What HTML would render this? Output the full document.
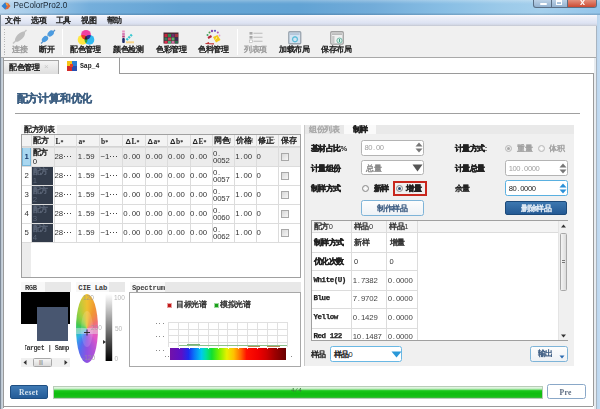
<!DOCTYPE html>
<html><head><meta charset="utf-8">
<style>
*{margin:0;padding:0;box-sizing:border-box}
html,body{width:600px;height:409px;overflow:hidden;background:#fff}
body{position:relative;font-family:"Liberation Sans",sans-serif;color:#222;font-size:7.5px;line-height:1}
.a{position:absolute}
i{font-style:normal;display:inline-block;width:1em;text-align:center;-webkit-text-stroke:0.4px currentColor}
.t{position:absolute;white-space:nowrap;line-height:1}
</style></head><body>
<!-- frame -->
<div class="a" style="left:0;top:0;width:600px;height:409px;background:linear-gradient(90deg,#7e8a98 0,#7e8a98 1px,#b8c4d0 1px,#d0d8e0 3px,#fff 3px)"></div>
<div class="a" style="left:594px;top:0;width:6px;height:409px;background:linear-gradient(90deg,#e8ecf0 0,#e8ecf0 2px,#a8b4c0 2px,#a8b4c0 3px,#bcd6ee 3px,#c4dcf2 100%)"></div>
<!-- title bar -->
<div class="a" style="left:0;top:0;width:600px;height:14.5px;background:linear-gradient(90deg,#b9d6ee 0,#a4cbe9 6%,#74aedb 15%,#64a4d4 30%,#62a3d4 50%,#72acd9 62%,#88bee4 74%,#9ccae9 84%,#a4cfec 90%,#94c5ea 100%)"></div>
<div class="a" style="left:0;top:0;width:600px;height:14.5px;background:linear-gradient(rgba(255,255,255,0.28) 0,rgba(255,255,255,0.12) 2px,rgba(255,255,255,0) 4px,rgba(0,0,0,0) 12.5px,rgba(40,70,100,0.22) 14.5px)"></div>
<div class="a" style="left:1px;top:1.5px;width:10px;height:7.5px;">
<svg width="10" height="8" viewBox="0 0 10 8"><path d="M0.5 4 L4 0.5 L6 2 L6 6.5 L4 7.5 Z" fill="#2f7fd0"/><path d="M4 0.5 L7 1 L9.5 4 L7 7 L4 7.5 L6 4 Z" fill="#e06a3a"/><path d="M5 1 L7 1.5 L6.5 4 L5 3 Z" fill="#f0a040"/></svg>
</div>
<div class="t" style="left:13.5px;top:2.3px;font-size:8.2px;color:#1b2733">PeColorPro2.0</div>
<!-- window controls -->
<div class="a" style="left:533px;top:-1px;width:64px;height:8.5px;border:1px solid #5a6e84;border-top:none;border-radius:0 0 3px 3px;background:linear-gradient(#c2d6ea,#94b2d0);overflow:hidden">
 <div class="a" style="left:17px;top:0;width:1px;height:8px;background:#5a6e84"></div>
 <div class="a" style="left:33px;top:0;width:1px;height:8px;background:#5a6e84"></div>
 <div class="a" style="left:34px;top:0;width:30px;height:8px;background:linear-gradient(#e89a88,#cc4a32)"></div>
 <div class="a" style="left:5.5px;top:4px;width:7px;height:2px;background:#fff;border-radius:1px"></div>
 <div class="a" style="left:22px;top:0.5px;width:6px;height:5px;border:1px solid #fff;border-top-width:2px"></div>
 <div class="t" style="left:46px;top:-1.5px;font-size:9px;color:#fff;font-weight:bold">x</div>
</div>
<!-- menu bar -->
<div class="a" style="left:1px;top:14.5px;width:596px;height:11.5px;background:linear-gradient(#fbfbfd 0,#eef0f8 20%,#dde3f3 80%,#d2d6e4 100%);border-bottom:1px solid #c9cdd8"></div>
<div class="t" style="left:5.4px;top:16.8px;font-size:7.5px;color:#222"><i>文</i><i>件</i></div>
<div class="t" style="left:31.4px;top:16.8px;font-size:7.5px;color:#222"><i>选</i><i>项</i></div>
<div class="t" style="left:55.9px;top:16.8px;font-size:7.5px;color:#222"><i>工</i><i>具</i></div>
<div class="t" style="left:81.3px;top:16.8px;font-size:7.5px;color:#222"><i>视</i><i>图</i></div>
<div class="t" style="left:106.6px;top:16.8px;font-size:7.5px;color:#222"><i>帮</i><i>助</i></div>
<!-- toolbar -->
<div class="a" style="left:1px;top:26px;width:595px;height:31.5px;background:#f0f0f0;border-bottom:1px solid #a9a9a9"></div>
<div class="a" style="left:4px;top:29px;width:1px;height:26px;background:repeating-linear-gradient(#b8b8b8 0,#b8b8b8 1px,transparent 1px,transparent 2.5px)"></div>
<div class="a" style="left:62px;top:29px;width:1px;height:26px;background:#d0d0d0;border-right:1px solid #fff"></div>
<div class="a" style="left:237px;top:29px;width:1px;height:26px;background:#d0d0d0;border-right:1px solid #fff"></div>
<svg class="a" style="left:10px;top:28px" width="20" height="18" viewBox="0 0 20 18">
 <path d="M3 15.5 L6.5 12" stroke="#c4c4c4" stroke-width="1.5"/>
 <path d="M16.5 2 L13.5 5" stroke="#c4c4c4" stroke-width="1.5"/>
 <ellipse cx="10" cy="8.7" rx="6.5" ry="3" transform="rotate(-45 10 8.7)" fill="#bdbdbd"/>
</svg>
<svg class="a" style="left:38px;top:28px" width="20" height="18" viewBox="0 0 20 18">
 <path d="M3 15.5 L5.5 13" stroke="#5a8fc0" stroke-width="1.3"/>
 <path d="M17 2 L14.5 4.5" stroke="#5a8fc0" stroke-width="1.3"/>
 <ellipse cx="7" cy="11" rx="3.6" ry="2.6" transform="rotate(-45 7 11)" fill="#4b9be0"/>
 <ellipse cx="12.7" cy="5.5" rx="3.6" ry="2.6" transform="rotate(-45 12.7 5.5)" fill="#4b9be0"/>
 <path d="M8.5 8.5 L11 7" stroke="#8ab" stroke-width="0.8"/>
</svg>
<svg class="a" style="left:77px;top:28.5px" width="18" height="17" viewBox="0 0 18 17">
 <g style="isolation:isolate">
 <circle cx="9" cy="5.8" r="4.9" fill="#f040a0" style="mix-blend-mode:multiply"/>
 <circle cx="5.6" cy="10.8" r="4.9" fill="#ffe640" style="mix-blend-mode:multiply"/>
 <circle cx="12.4" cy="10.8" r="4.9" fill="#30b8f0" style="mix-blend-mode:multiply"/>
 </g>
</svg>
<svg class="a" style="left:120px;top:29px" width="16" height="16" viewBox="0 0 16 16">
 <rect x="2.2" y="1.5" width="2.6" height="2" fill="#e88fc0"/>
 <rect x="2.2" y="4" width="2.6" height="2" fill="#d77ab5"/>
 <rect x="2.2" y="6.5" width="2.6" height="2" fill="#c23d7a"/>
 <rect x="2.2" y="9" width="2.6" height="5" rx="1" fill="#1f2e6a"/>
 <path d="M6.5 11 L12 5.5" stroke="#38c8d0" stroke-width="2.3" stroke-dasharray="2 0.8"/>
 <rect x="6" y="12.3" width="8" height="2" fill="#f5d48a"/>
</svg>
<svg class="a" style="left:163px;top:31px" width="17" height="14" viewBox="0 0 17 14">
 <rect x="0.5" y="1.5" width="15" height="11" fill="#4a2a35"/>
 <rect x="1.5" y="3" width="3" height="3" fill="#c3263d"/><rect x="5" y="3" width="3" height="3" fill="#2b8a4a"/><rect x="8.5" y="3" width="3" height="3" fill="#6b2d6e"/><rect x="12" y="3" width="3" height="3" fill="#a03040"/>
 <rect x="1.5" y="6.5" width="3" height="3" fill="#3a7a5a"/><rect x="5" y="6.5" width="3" height="3" fill="#d43b5a"/><rect x="8.5" y="6.5" width="3" height="3" fill="#5ab06a"/><rect x="12" y="6.5" width="3" height="3" fill="#3a2a5a"/>
 <rect x="1.5" y="10" width="3" height="2.5" fill="#e03050"/><rect x="5" y="10" width="3" height="2.5" fill="#4ab07a"/><rect x="8.5" y="10" width="3" height="2.5" fill="#d070a0"/><rect x="12" y="10" width="3" height="2.5" fill="#2a6a4a"/>
</svg>
<svg class="a" style="left:205px;top:29px" width="17" height="16" viewBox="0 0 17 16">
 <circle cx="7" cy="2" r="1.2" fill="#8a4ab0"/><circle cx="10" cy="1.8" r="1.1" fill="#5a5ac0"/><circle cx="12.8" cy="3.5" r="1" fill="#b05ab0"/>
 <circle cx="4.5" cy="3.5" r="1" fill="#4aa04a"/><circle cx="2.5" cy="6" r="1" fill="#40a060"/>
 <path d="M2.5 8 L6 6 L7 8 L3.5 10 Z" fill="#b8283a"/>
 <path d="M4 13.5 L2 14.5 L9 14.8" stroke="#c03030" stroke-width="1.2" fill="none"/>
 <path d="M8 8 L12.5 6 L15.5 11 L11 13.5 Z" fill="#f2c81a"/>
 <path d="M11.2 8 L12 9 L10 10.5" stroke="#fff0a0" stroke-width="0.8" fill="none"/>
 <circle cx="14.5" cy="6.5" r="0.9" fill="#e0a0d0"/>
</svg>
<svg class="a" style="left:248px;top:31px" width="16" height="13" viewBox="0 0 16 13">
 <rect x="1.5" y="1" width="3" height="2.6" fill="#a8a8a8"/><rect x="5.5" y="1.7" width="9" height="1.2" fill="#c4c4c4"/>
 <rect x="1.5" y="5" width="3" height="2.6" fill="#a8a8a8"/><rect x="5.5" y="5.7" width="9" height="1.2" fill="#c4c4c4"/>
 <rect x="1.5" y="9" width="3" height="2.6" fill="#fff" stroke="#b0b0b0" stroke-width="0.6"/><rect x="5.5" y="9.7" width="9" height="1.2" fill="#c4c4c4"/>
</svg>
<svg class="a" style="left:288px;top:30.5px" width="14" height="14" viewBox="0 0 14 14">
 <rect x="0.75" y="0.75" width="12" height="12" rx="1" fill="#d4e4f2" stroke="#9aa4ae" stroke-width="1.3"/>
 <rect x="2" y="2.3" width="9.5" height="1.5" fill="#aec0d4"/>
 <circle cx="7" cy="8.3" r="2.4" fill="none" stroke="#58bcd8" stroke-width="1.1"/><path d="M7 5.2v1M7 10.4v1M3.9 8.3h1M9.1 8.3h1" stroke="#58bcd8" stroke-width="0.8"/>
</svg>
<svg class="a" style="left:330px;top:30.5px" width="14" height="14" viewBox="0 0 14 14">
 <rect x="0.75" y="0.75" width="12.5" height="12.3" rx="1" fill="#f0f0f0" stroke="#a0a0a0" stroke-width="1.3"/>
 <rect x="2" y="2.3" width="10" height="1.6" fill="#b4b4b4"/>
 <rect x="2.2" y="5" width="2.3" height="7" fill="#c8c8c8"/>
 <circle cx="9.5" cy="9.6" r="2.6" fill="#d8f0e8" stroke="#6ab0a0" stroke-width="0.9"/>
 <path d="M9.5 8 L9.5 11" stroke="#3a9a80" stroke-width="0.9"/>
</svg>
<div class="t" style="left:12px;top:46px;color:#9c9c9c"><i>连</i><i>接</i></div>
<div class="t" style="left:39px;top:46px;color:#222"><i>断</i><i>开</i></div>
<div class="t" style="left:70px;top:46px;color:#222"><i>配</i><i>色</i><i>管</i><i>理</i></div>
<div class="t" style="left:113px;top:46px;color:#222"><i>颜</i><i>色</i><i>检</i><i>测</i></div>
<div class="t" style="left:156px;top:46px;color:#222"><i>色</i><i>彩</i><i>管</i><i>理</i></div>
<div class="t" style="left:198px;top:46px;color:#222"><i>色</i><i>料</i><i>管</i><i>理</i></div>
<div class="t" style="left:244px;top:46px;color:#9c9c9c"><i>列</i><i>表</i><i>项</i></div>
<div class="t" style="left:279px;top:46px;color:#222"><i>加</i><i>载</i><i>布</i><i>局</i></div>
<div class="t" style="left:321px;top:46px;color:#222"><i>保</i><i>存</i><i>布</i><i>局</i></div>


<!-- tab bar -->
<div class="a" style="left:3px;top:57.5px;width:591px;height:16px;background:#fff"></div>
<div class="a" style="left:3px;top:60.3px;width:56px;height:13.8px;background:linear-gradient(#f4f4f4,#dedede);border:1px solid #a6a6a6;border-bottom:none"></div>
<div class="t" style="left:9.4px;top:64px;font-size:7.5px;color:#222"><i>配</i><i>色</i><i>管</i><i>理</i></div>
<div class="t" style="left:44px;top:63px;font-size:8px;color:#c8c8c8">×</div>
<div class="a" style="left:119px;top:57.5px;width:1px;height:16.5px;background:#9a9a9a"></div>
<div class="a" style="left:119px;top:73.3px;width:474px;height:1px;background:#9a9a9a"></div>
<div class="a" style="left:3px;top:57.5px;width:1px;height:350px;background:#9a9a9a"></div>
<div class="a" style="left:592.5px;top:73.3px;width:1px;height:333px;background:#9a9a9a"></div>
<div class="a" style="left:3px;top:406px;width:590px;height:1px;background:#9a9a9a"></div>
<svg class="a" style="left:67px;top:61px" width="12" height="10" viewBox="0 0 12 10">
 <rect x="0" y="0" width="5" height="5" fill="#f5c518"/><rect x="5" y="0" width="5" height="5" fill="#2a7fd4"/>
 <rect x="0" y="5" width="5" height="5" fill="#d42a2a"/><rect x="5" y="5" width="5" height="5" fill="#2a4fb0"/>
 <path d="M3 3 L6 3 L6 6 L3 6Z" fill="#e0402a"/>
</svg>
<div class="t" style="left:80px;top:64px;font-family:'Liberation Mono',monospace;font-weight:bold;font-size:6.6px;color:#222;letter-spacing:-0.1px">Sap_4</div>

<!-- content -->
<div class="t" style="left:16.6px;top:92.5px;font-size:10.8px;font-weight:bold;color:#3d5f82"><i>配</i><i>方</i><i>计</i><i>算</i><i>和</i><i>优</i><i>化</i></div>
<div class="a" style="left:15px;top:113px;width:565px;height:1px;background:#a0a0a0"></div>

<!--MAIN-->
<div class="a" style="left:21px;top:125px;width:279.5px;height:9px;background:linear-gradient(90deg,#fafafa 0,#fafafa 36px,#ececec 36px,#ececec 100%)"></div>
<div class="t" style="left:24px;top:126px;"><i>配</i><i>方</i><i>列</i><i>表</i></div>
<div class="a" style="left:21px;top:134px;width:280px;height:144px;background:#fff;border:1px solid #a0a0a0"></div>
<div class="a" style="left:22px;top:242px;width:9px;height:35px;background:#ececec"></div>
<div class="a" style="left:22px;top:135px;width:278px;height:12px;background:#f3f3f3;border-bottom:1px solid #d4d4d4"></div>
<div class="a" style="left:31px;top:147px;width:269px;height:19px;background:#ececec"></div>
<div class="a" style="left:22px;top:147px;width:9px;height:19px;background:#a9d7f0;border:1px solid #78b8dc"></div>
<div class="a" style="left:31.5px;top:166.5px;width:21.5px;height:18px;background:#323b4a"></div>
<div class="a" style="left:31.5px;top:185.5px;width:21.5px;height:18px;background:#323b4a"></div>
<div class="a" style="left:31.5px;top:204.5px;width:21.5px;height:18px;background:#323b4a"></div>
<div class="a" style="left:31.5px;top:223.5px;width:21.5px;height:18px;background:#323b4a"></div>
<div class="a" style="left:31px;top:135px;width:1px;height:107px;background:#dcdcdc"></div>
<div class="a" style="left:53.5px;top:135px;width:1px;height:107px;background:#dcdcdc"></div>
<div class="a" style="left:76px;top:135px;width:1px;height:107px;background:#dcdcdc"></div>
<div class="a" style="left:99px;top:135px;width:1px;height:107px;background:#dcdcdc"></div>
<div class="a" style="left:122px;top:135px;width:1px;height:107px;background:#dcdcdc"></div>
<div class="a" style="left:144.8px;top:135px;width:1px;height:107px;background:#dcdcdc"></div>
<div class="a" style="left:167px;top:135px;width:1px;height:107px;background:#dcdcdc"></div>
<div class="a" style="left:189.5px;top:135px;width:1px;height:107px;background:#dcdcdc"></div>
<div class="a" style="left:211.5px;top:135px;width:1px;height:107px;background:#dcdcdc"></div>
<div class="a" style="left:233.8px;top:135px;width:1px;height:107px;background:#dcdcdc"></div>
<div class="a" style="left:256px;top:135px;width:1px;height:107px;background:#dcdcdc"></div>
<div class="a" style="left:278px;top:135px;width:1px;height:107px;background:#dcdcdc"></div>
<div class="a" style="left:22px;top:147px;width:278px;height:1px;background:#dcdcdc"></div>
<div class="a" style="left:22px;top:166px;width:278px;height:1px;background:#dcdcdc"></div>
<div class="a" style="left:22px;top:185px;width:278px;height:1px;background:#dcdcdc"></div>
<div class="a" style="left:22px;top:204px;width:278px;height:1px;background:#dcdcdc"></div>
<div class="a" style="left:22px;top:223px;width:278px;height:1px;background:#dcdcdc"></div>
<div class="a" style="left:22px;top:242px;width:278px;height:1px;background:#dcdcdc"></div>
<div class="t" style="left:33px;top:137px;"><i>配</i><i>方</i></div>
<div class="t" style="left:55.5px;top:138px;font-family:'Liberation Serif',serif;font-weight:bold;font-size:7.6px;color:#222"><span style="font-size:7.4px">L</span><span style="font-size:6px">*</span></div>
<div class="t" style="left:78.5px;top:138px;font-family:'Liberation Serif',serif;font-weight:bold;font-size:7.6px;color:#222"><span style="font-size:7.4px">a</span><span style="font-size:6px">*</span></div>
<div class="t" style="left:101px;top:138px;font-family:'Liberation Serif',serif;font-weight:bold;font-size:7.6px;color:#222"><span style="font-size:7.4px">b</span><span style="font-size:6px">*</span></div>
<div class="t" style="left:125.5px;top:137.5px;font-family:'Liberation Serif',serif;font-weight:bold;font-size:7.6px;color:#222"><span style="font-family:'Liberation Sans',sans-serif;font-size:7.6px">Δ</span><span style="font-size:7.4px;margin-left:0.6px">L</span><span style="font-size:6px">*</span></div>
<div class="t" style="left:147.5px;top:137.5px;font-family:'Liberation Serif',serif;font-weight:bold;font-size:7.6px;color:#222"><span style="font-family:'Liberation Sans',sans-serif;font-size:7.6px">Δ</span><span style="font-size:7.4px;margin-left:0.6px">a</span><span style="font-size:6px">*</span></div>
<div class="t" style="left:170px;top:137.5px;font-family:'Liberation Serif',serif;font-weight:bold;font-size:7.6px;color:#222"><span style="font-family:'Liberation Sans',sans-serif;font-size:7.6px">Δ</span><span style="font-size:7.4px;margin-left:0.6px">b</span><span style="font-size:6px">*</span></div>
<div class="t" style="left:192.5px;top:137.5px;font-family:'Liberation Serif',serif;font-weight:bold;font-size:7.6px;color:#222"><span style="font-family:'Liberation Sans',sans-serif;font-size:7.6px">Δ</span><span style="font-size:7.4px;margin-left:0.6px">E</span><span style="font-size:6px">*</span></div>
<div class="t" style="left:214px;top:137px;"><i>网</i><i>色</i>!</div>
<div class="t" style="left:236px;top:137px;"><i>价</i><i>格</i>!</div>
<div class="t" style="left:258px;top:137px;"><i>修</i><i>正</i>:</div>
<div class="t" style="left:281px;top:137px;"><i>保</i><i>存</i></div>
<div class="t" style="left:24.5px;top:153px;font-family:'Liberation Sans',sans-serif;font-size:7.8px;letter-spacing:-0.15px;color:#1a3a6a;font-weight:bold">1</div>
<div class="t" style="left:32.7px;top:149px;color:#222;"><i>配</i><i>方</i></div>
<div class="t" style="left:32.7px;top:157.5px;font-family:'Liberation Sans',sans-serif;font-size:7.8px;letter-spacing:-0.15px;color:#222">0</div>
<div class="t" style="left:54.5px;top:153px;font-family:'Liberation Sans',sans-serif;font-size:7.8px;letter-spacing:-0.15px;color:#333">28</div>
<div class="t" style="left:77.7px;top:153px;font-family:'Liberation Sans',sans-serif;font-size:7.8px;letter-spacing:-0.15px;color:#333">1<span style="margin:0 1.2px 0 1px">.</span>59</div>
<div class="t" style="left:100.5px;top:153px;font-family:'Liberation Sans',sans-serif;font-size:7.8px;letter-spacing:-0.15px;color:#333">−1</div>
<div class="t" style="left:123.3px;top:153px;font-family:'Liberation Sans',sans-serif;font-size:7.8px;letter-spacing:-0.15px;color:#333">0<span style="margin:0 1.2px 0 1px">.</span>00</div>
<div class="t" style="left:145.7px;top:153px;font-family:'Liberation Sans',sans-serif;font-size:7.8px;letter-spacing:-0.15px;color:#333">0<span style="margin:0 1.2px 0 1px">.</span>00</div>
<div class="t" style="left:167.9px;top:153px;font-family:'Liberation Sans',sans-serif;font-size:7.8px;letter-spacing:-0.15px;color:#333">0<span style="margin:0 1.2px 0 1px">.</span>00</div>
<div class="t" style="left:190.1px;top:153px;font-family:'Liberation Sans',sans-serif;font-size:7.8px;letter-spacing:-0.15px;color:#333">0<span style="margin:0 1.2px 0 1px">.</span>00</div>
<div class="t" style="left:235.2px;top:153px;font-family:'Liberation Sans',sans-serif;font-size:7.8px;letter-spacing:-0.15px;color:#333">1<span style="margin:0 1.2px 0 1px">.</span>00</div>
<div class="t" style="left:256.5px;top:153px;font-family:'Liberation Sans',sans-serif;font-size:7.8px;letter-spacing:-0.15px;color:#333">0</div>
<div class="a" style="left:63.5px;top:155.6px;width:7.5px;height:1.3px;background:repeating-linear-gradient(90deg,#444 0,#444 1.3px,transparent 1.3px,transparent 2.9px)"></div>
<div class="a" style="left:109.5px;top:155.6px;width:7.5px;height:1.3px;background:repeating-linear-gradient(90deg,#444 0,#444 1.3px,transparent 1.3px,transparent 2.9px)"></div>
<div class="t" style="left:213px;top:149.6px;font-family:'Liberation Sans',sans-serif;font-size:7.8px;letter-spacing:-0.15px;color:#333">0<span style="margin-left:0.7px">.</span></div>
<div class="t" style="left:213px;top:156.8px;font-family:'Liberation Sans',sans-serif;font-size:7.8px;letter-spacing:-0.15px;color:#333">0052</div>
<div class="a" style="left:280.5px;top:152.5px;width:8px;height:8px;border:1px solid #a8a8a8;background:linear-gradient(135deg,#d8d8d8,#f6f6f6)"></div>
<div class="t" style="left:24.5px;top:172px;font-family:'Liberation Sans',sans-serif;font-size:7.8px;letter-spacing:-0.15px;color:#333;font-weight:normal">2</div>
<div class="t" style="left:32.7px;top:168px;color:#5c6678;"><i>配</i><i>方</i></div>
<div class="t" style="left:32.7px;top:176.5px;font-family:'Liberation Sans',sans-serif;font-size:7.8px;letter-spacing:-0.15px;color:#5c6678">1</div>
<div class="t" style="left:54.5px;top:172px;font-family:'Liberation Sans',sans-serif;font-size:7.8px;letter-spacing:-0.15px;color:#333">28</div>
<div class="t" style="left:77.7px;top:172px;font-family:'Liberation Sans',sans-serif;font-size:7.8px;letter-spacing:-0.15px;color:#333">1<span style="margin:0 1.2px 0 1px">.</span>59</div>
<div class="t" style="left:100.5px;top:172px;font-family:'Liberation Sans',sans-serif;font-size:7.8px;letter-spacing:-0.15px;color:#333">−1</div>
<div class="t" style="left:123.3px;top:172px;font-family:'Liberation Sans',sans-serif;font-size:7.8px;letter-spacing:-0.15px;color:#333">0<span style="margin:0 1.2px 0 1px">.</span>00</div>
<div class="t" style="left:145.7px;top:172px;font-family:'Liberation Sans',sans-serif;font-size:7.8px;letter-spacing:-0.15px;color:#333">0<span style="margin:0 1.2px 0 1px">.</span>00</div>
<div class="t" style="left:167.9px;top:172px;font-family:'Liberation Sans',sans-serif;font-size:7.8px;letter-spacing:-0.15px;color:#333">0<span style="margin:0 1.2px 0 1px">.</span>00</div>
<div class="t" style="left:190.1px;top:172px;font-family:'Liberation Sans',sans-serif;font-size:7.8px;letter-spacing:-0.15px;color:#333">0<span style="margin:0 1.2px 0 1px">.</span>00</div>
<div class="t" style="left:235.2px;top:172px;font-family:'Liberation Sans',sans-serif;font-size:7.8px;letter-spacing:-0.15px;color:#333">1<span style="margin:0 1.2px 0 1px">.</span>00</div>
<div class="t" style="left:256.5px;top:172px;font-family:'Liberation Sans',sans-serif;font-size:7.8px;letter-spacing:-0.15px;color:#333">0</div>
<div class="a" style="left:63.5px;top:174.6px;width:7.5px;height:1.3px;background:repeating-linear-gradient(90deg,#444 0,#444 1.3px,transparent 1.3px,transparent 2.9px)"></div>
<div class="a" style="left:109.5px;top:174.6px;width:7.5px;height:1.3px;background:repeating-linear-gradient(90deg,#444 0,#444 1.3px,transparent 1.3px,transparent 2.9px)"></div>
<div class="t" style="left:213px;top:168.6px;font-family:'Liberation Sans',sans-serif;font-size:7.8px;letter-spacing:-0.15px;color:#333">0<span style="margin-left:0.7px">.</span></div>
<div class="t" style="left:213px;top:175.8px;font-family:'Liberation Sans',sans-serif;font-size:7.8px;letter-spacing:-0.15px;color:#333">0057</div>
<div class="a" style="left:280.5px;top:171.5px;width:8px;height:8px;border:1px solid #a8a8a8;background:linear-gradient(135deg,#d8d8d8,#f6f6f6)"></div>
<div class="t" style="left:24.5px;top:191px;font-family:'Liberation Sans',sans-serif;font-size:7.8px;letter-spacing:-0.15px;color:#333;font-weight:normal">3</div>
<div class="t" style="left:32.7px;top:187px;color:#5c6678;"><i>配</i><i>方</i></div>
<div class="t" style="left:32.7px;top:195.5px;font-family:'Liberation Sans',sans-serif;font-size:7.8px;letter-spacing:-0.15px;color:#5c6678">2</div>
<div class="t" style="left:54.5px;top:191px;font-family:'Liberation Sans',sans-serif;font-size:7.8px;letter-spacing:-0.15px;color:#333">28</div>
<div class="t" style="left:77.7px;top:191px;font-family:'Liberation Sans',sans-serif;font-size:7.8px;letter-spacing:-0.15px;color:#333">1<span style="margin:0 1.2px 0 1px">.</span>59</div>
<div class="t" style="left:100.5px;top:191px;font-family:'Liberation Sans',sans-serif;font-size:7.8px;letter-spacing:-0.15px;color:#333">−1</div>
<div class="t" style="left:123.3px;top:191px;font-family:'Liberation Sans',sans-serif;font-size:7.8px;letter-spacing:-0.15px;color:#333">0<span style="margin:0 1.2px 0 1px">.</span>00</div>
<div class="t" style="left:145.7px;top:191px;font-family:'Liberation Sans',sans-serif;font-size:7.8px;letter-spacing:-0.15px;color:#333">0<span style="margin:0 1.2px 0 1px">.</span>00</div>
<div class="t" style="left:167.9px;top:191px;font-family:'Liberation Sans',sans-serif;font-size:7.8px;letter-spacing:-0.15px;color:#333">0<span style="margin:0 1.2px 0 1px">.</span>00</div>
<div class="t" style="left:190.1px;top:191px;font-family:'Liberation Sans',sans-serif;font-size:7.8px;letter-spacing:-0.15px;color:#333">0<span style="margin:0 1.2px 0 1px">.</span>00</div>
<div class="t" style="left:235.2px;top:191px;font-family:'Liberation Sans',sans-serif;font-size:7.8px;letter-spacing:-0.15px;color:#333">1<span style="margin:0 1.2px 0 1px">.</span>00</div>
<div class="t" style="left:256.5px;top:191px;font-family:'Liberation Sans',sans-serif;font-size:7.8px;letter-spacing:-0.15px;color:#333">0</div>
<div class="a" style="left:63.5px;top:193.6px;width:7.5px;height:1.3px;background:repeating-linear-gradient(90deg,#444 0,#444 1.3px,transparent 1.3px,transparent 2.9px)"></div>
<div class="a" style="left:109.5px;top:193.6px;width:7.5px;height:1.3px;background:repeating-linear-gradient(90deg,#444 0,#444 1.3px,transparent 1.3px,transparent 2.9px)"></div>
<div class="t" style="left:213px;top:187.6px;font-family:'Liberation Sans',sans-serif;font-size:7.8px;letter-spacing:-0.15px;color:#333">0<span style="margin-left:0.7px">.</span></div>
<div class="t" style="left:213px;top:194.8px;font-family:'Liberation Sans',sans-serif;font-size:7.8px;letter-spacing:-0.15px;color:#333">0057</div>
<div class="a" style="left:280.5px;top:190.5px;width:8px;height:8px;border:1px solid #a8a8a8;background:linear-gradient(135deg,#d8d8d8,#f6f6f6)"></div>
<div class="t" style="left:24.5px;top:210px;font-family:'Liberation Sans',sans-serif;font-size:7.8px;letter-spacing:-0.15px;color:#333;font-weight:normal">4</div>
<div class="t" style="left:32.7px;top:206px;color:#5c6678;"><i>配</i><i>方</i></div>
<div class="t" style="left:32.7px;top:214.5px;font-family:'Liberation Sans',sans-serif;font-size:7.8px;letter-spacing:-0.15px;color:#5c6678">3</div>
<div class="t" style="left:54.5px;top:210px;font-family:'Liberation Sans',sans-serif;font-size:7.8px;letter-spacing:-0.15px;color:#333">28</div>
<div class="t" style="left:77.7px;top:210px;font-family:'Liberation Sans',sans-serif;font-size:7.8px;letter-spacing:-0.15px;color:#333">1<span style="margin:0 1.2px 0 1px">.</span>59</div>
<div class="t" style="left:100.5px;top:210px;font-family:'Liberation Sans',sans-serif;font-size:7.8px;letter-spacing:-0.15px;color:#333">−1</div>
<div class="t" style="left:123.3px;top:210px;font-family:'Liberation Sans',sans-serif;font-size:7.8px;letter-spacing:-0.15px;color:#333">0<span style="margin:0 1.2px 0 1px">.</span>00</div>
<div class="t" style="left:145.7px;top:210px;font-family:'Liberation Sans',sans-serif;font-size:7.8px;letter-spacing:-0.15px;color:#333">0<span style="margin:0 1.2px 0 1px">.</span>00</div>
<div class="t" style="left:167.9px;top:210px;font-family:'Liberation Sans',sans-serif;font-size:7.8px;letter-spacing:-0.15px;color:#333">0<span style="margin:0 1.2px 0 1px">.</span>00</div>
<div class="t" style="left:190.1px;top:210px;font-family:'Liberation Sans',sans-serif;font-size:7.8px;letter-spacing:-0.15px;color:#333">0<span style="margin:0 1.2px 0 1px">.</span>00</div>
<div class="t" style="left:235.2px;top:210px;font-family:'Liberation Sans',sans-serif;font-size:7.8px;letter-spacing:-0.15px;color:#333">1<span style="margin:0 1.2px 0 1px">.</span>00</div>
<div class="t" style="left:256.5px;top:210px;font-family:'Liberation Sans',sans-serif;font-size:7.8px;letter-spacing:-0.15px;color:#333">0</div>
<div class="a" style="left:63.5px;top:212.6px;width:7.5px;height:1.3px;background:repeating-linear-gradient(90deg,#444 0,#444 1.3px,transparent 1.3px,transparent 2.9px)"></div>
<div class="a" style="left:109.5px;top:212.6px;width:7.5px;height:1.3px;background:repeating-linear-gradient(90deg,#444 0,#444 1.3px,transparent 1.3px,transparent 2.9px)"></div>
<div class="t" style="left:213px;top:206.6px;font-family:'Liberation Sans',sans-serif;font-size:7.8px;letter-spacing:-0.15px;color:#333">0<span style="margin-left:0.7px">.</span></div>
<div class="t" style="left:213px;top:213.8px;font-family:'Liberation Sans',sans-serif;font-size:7.8px;letter-spacing:-0.15px;color:#333">0060</div>
<div class="a" style="left:280.5px;top:209.5px;width:8px;height:8px;border:1px solid #a8a8a8;background:linear-gradient(135deg,#d8d8d8,#f6f6f6)"></div>
<div class="t" style="left:24.5px;top:229px;font-family:'Liberation Sans',sans-serif;font-size:7.8px;letter-spacing:-0.15px;color:#333;font-weight:normal">5</div>
<div class="t" style="left:32.7px;top:225px;color:#5c6678;"><i>配</i><i>方</i></div>
<div class="t" style="left:32.7px;top:233.5px;font-family:'Liberation Sans',sans-serif;font-size:7.8px;letter-spacing:-0.15px;color:#5c6678">4</div>
<div class="t" style="left:54.5px;top:229px;font-family:'Liberation Sans',sans-serif;font-size:7.8px;letter-spacing:-0.15px;color:#333">28</div>
<div class="t" style="left:77.7px;top:229px;font-family:'Liberation Sans',sans-serif;font-size:7.8px;letter-spacing:-0.15px;color:#333">1<span style="margin:0 1.2px 0 1px">.</span>59</div>
<div class="t" style="left:100.5px;top:229px;font-family:'Liberation Sans',sans-serif;font-size:7.8px;letter-spacing:-0.15px;color:#333">−1</div>
<div class="t" style="left:123.3px;top:229px;font-family:'Liberation Sans',sans-serif;font-size:7.8px;letter-spacing:-0.15px;color:#333">0<span style="margin:0 1.2px 0 1px">.</span>00</div>
<div class="t" style="left:145.7px;top:229px;font-family:'Liberation Sans',sans-serif;font-size:7.8px;letter-spacing:-0.15px;color:#333">0<span style="margin:0 1.2px 0 1px">.</span>00</div>
<div class="t" style="left:167.9px;top:229px;font-family:'Liberation Sans',sans-serif;font-size:7.8px;letter-spacing:-0.15px;color:#333">0<span style="margin:0 1.2px 0 1px">.</span>00</div>
<div class="t" style="left:190.1px;top:229px;font-family:'Liberation Sans',sans-serif;font-size:7.8px;letter-spacing:-0.15px;color:#333">0<span style="margin:0 1.2px 0 1px">.</span>00</div>
<div class="t" style="left:235.2px;top:229px;font-family:'Liberation Sans',sans-serif;font-size:7.8px;letter-spacing:-0.15px;color:#333">1<span style="margin:0 1.2px 0 1px">.</span>00</div>
<div class="t" style="left:256.5px;top:229px;font-family:'Liberation Sans',sans-serif;font-size:7.8px;letter-spacing:-0.15px;color:#333">0</div>
<div class="a" style="left:63.5px;top:231.6px;width:7.5px;height:1.3px;background:repeating-linear-gradient(90deg,#444 0,#444 1.3px,transparent 1.3px,transparent 2.9px)"></div>
<div class="a" style="left:109.5px;top:231.6px;width:7.5px;height:1.3px;background:repeating-linear-gradient(90deg,#444 0,#444 1.3px,transparent 1.3px,transparent 2.9px)"></div>
<div class="t" style="left:213px;top:225.6px;font-family:'Liberation Sans',sans-serif;font-size:7.8px;letter-spacing:-0.15px;color:#333">0<span style="margin-left:0.7px">.</span></div>
<div class="t" style="left:213px;top:232.8px;font-family:'Liberation Sans',sans-serif;font-size:7.8px;letter-spacing:-0.15px;color:#333">0062</div>
<div class="a" style="left:280.5px;top:228.5px;width:8px;height:8px;border:1px solid #a8a8a8;background:linear-gradient(135deg,#d8d8d8,#f6f6f6)"></div><div class="a" style="left:21px;top:282px;width:50px;height:9.5px;background:linear-gradient(90deg,#f8f8f8 0,#f8f8f8 24px,#e8e8e8 24px)"></div>
<div class="t" style="left:25px;top:284.5px;font-family:'Liberation Mono',monospace;font-size:7.2px;font-weight:bold;color:#3a3a3a;letter-spacing:-0.5px">RGB</div>
<div class="a" style="left:20.6px;top:291.5px;width:49.4px;height:32.5px;background:#000"></div>
<div class="a" style="left:36.8px;top:307px;width:31.5px;height:33.5px;background:#485670"></div>
<div class="a" style="left:25px;top:343px;width:45px;height:10px;overflow:hidden"><div class="t" style="left:-2px;top:2px;font-family:'Liberation Mono',monospace;font-size:6.8px;font-weight:bold;color:#333;letter-spacing:-0.55px">Target | Samp</div></div>
<div class="a" style="left:70px;top:340px;width:6px;height:30px;background:#fff"></div>
<div class="a" style="left:21px;top:357.5px;width:49px;height:9.5px;background:#f0f0f0"></div>
<div class="a" style="left:33px;top:358px;width:19px;height:8.5px;background:linear-gradient(#f6f6f6,#dadada);border:1px solid #a8a8a8;border-radius:1.5px"></div>
<div class="t" style="left:39px;top:359.5px;font-size:5px;color:#555">|||</div>
<svg class="a" style="left:23px;top:360px" width="4" height="5"><path d="M3.5 0 L0.5 2.5 L3.5 5Z" fill="#333"/></svg>
<svg class="a" style="left:64px;top:360px" width="4" height="5"><path d="M0.5 0 L3.5 2.5 L0.5 5Z" fill="#333"/></svg>
<div class="a" style="left:76px;top:282px;width:49px;height:9.5px;background:linear-gradient(90deg,#f8f8f8 0,#f8f8f8 33px,#e8e8e8 33px)"></div>
<div class="t" style="left:78.3px;top:284.5px;font-family:'Liberation Mono',monospace;font-size:7.2px;font-weight:bold;color:#3a3a3a;letter-spacing:-0.2px">CIE Lab</div>
<div class="a" style="left:76px;top:294px;width:22px;height:69.4px;border-radius:50%;overflow:hidden;background:conic-gradient(from 0deg at 11px 34.7px,#f0c030 0deg,#f09830 18deg,#f07070 55deg,#f068a0 80deg,#e058c8 140deg,#9050e0 180deg,#5070f0 200deg,#30b0e8 225deg,#30c8a0 255deg,#40c850 292deg,#a0d040 335deg,#f0c030 360deg)"><div class="a" style="left:5px;top:17px;width:12px;height:36px;border-radius:50%;background:rgba(255,255,255,0.15)"></div><div class="a" style="left:0;top:34px;width:22px;height:6px;background:rgba(230,230,230,0.45)"></div></div>
<svg class="a" style="left:74px;top:292px" width="54" height="74" viewBox="0 0 54 74">
<defs><linearGradient id="gb" x1="0" y1="0" x2="0" y2="1"><stop offset="0" stop-color="#fff"/><stop offset="1" stop-color="#000"/></linearGradient></defs>
<path d="M10 40.5 h6 M13 37.5 v6" stroke="#222" stroke-width="0.9"/>
<rect x="31.6" y="2" width="6.6" height="67" fill="url(#gb)"/>
<path d="M29 48 L32 50 L29 52Z" fill="#333"/>
</svg>
<div class="t" style="left:114px;top:295px;font-size:6.5px;color:#b8b8b8">100</div>
<div class="t" style="left:115px;top:326px;font-size:6.5px;color:#b8b8b8">50</div>
<div class="t" style="left:114.5px;top:356px;font-size:6.5px;color:#b8b8b8">0</div>
<div class="t" style="left:83px;top:294.5px;font-size:6.5px;color:rgba(150,150,150,0.8)">120</div>
<div class="t" style="left:82px;top:355px;font-size:6.5px;color:rgba(150,150,150,0.8)">-120</div>
<div class="t" style="left:91px;top:324.5px;font-size:6.5px;color:rgba(150,150,150,0.7)">200</div>
<div class="a" style="left:130px;top:282px;width:171px;height:9.5px;background:linear-gradient(90deg,#f8f8f8 0,#f8f8f8 35px,#e8e8e8 35px)"></div>
<div class="t" style="left:132px;top:284.5px;font-family:'Liberation Mono',monospace;font-size:7.2px;font-weight:bold;color:#3a3a3a;letter-spacing:-0.2px">Spectrum</div>
<div class="a" style="left:129.3px;top:291.5px;width:171.5px;height:75.5px;background:#fff;border:1px solid #a8a8a8"></div>
<div class="a" style="left:167px;top:302.5px;width:5px;height:5px;background:#c01818;border:1px solid #e8a0a0"></div>
<div class="t" style="left:176px;top:301px;font-size:7.5px;color:#333"><i>目</i><i>标</i><i>光</i><i>谱</i></div>
<div class="a" style="left:213.5px;top:302.5px;width:5px;height:5px;background:#18a018;border:1px solid #a0d8a0"></div>
<div class="t" style="left:220px;top:301px;font-size:7.5px;color:#333"><i>模</i><i>拟</i><i>光</i><i>谱</i></div>
<div class="a" style="left:168.0px;top:322px;width:0.6px;height:25px;background:#e0e0e0"></div>
<div class="a" style="left:177.9px;top:322px;width:0.6px;height:25px;background:#e0e0e0"></div>
<div class="a" style="left:187.8px;top:322px;width:0.6px;height:25px;background:#e0e0e0"></div>
<div class="a" style="left:197.7px;top:322px;width:0.6px;height:25px;background:#e0e0e0"></div>
<div class="a" style="left:207.6px;top:322px;width:0.6px;height:25px;background:#e0e0e0"></div>
<div class="a" style="left:217.5px;top:322px;width:0.6px;height:25px;background:#e0e0e0"></div>
<div class="a" style="left:227.4px;top:322px;width:0.6px;height:25px;background:#e0e0e0"></div>
<div class="a" style="left:237.3px;top:322px;width:0.6px;height:25px;background:#e0e0e0"></div>
<div class="a" style="left:247.2px;top:322px;width:0.6px;height:25px;background:#e0e0e0"></div>
<div class="a" style="left:257.1px;top:322px;width:0.6px;height:25px;background:#e0e0e0"></div>
<div class="a" style="left:267.0px;top:322px;width:0.6px;height:25px;background:#e0e0e0"></div>
<div class="a" style="left:276.9px;top:322px;width:0.6px;height:25px;background:#e0e0e0"></div>
<div class="a" style="left:286.8px;top:322px;width:0.6px;height:25px;background:#e0e0e0"></div>
<div class="a" style="left:168px;top:322px;width:119px;height:0.6px;background:#e0e0e0"></div>
<div class="a" style="left:168px;top:329px;width:119px;height:0.6px;background:#e0e0e0"></div>
<div class="a" style="left:168px;top:335.3px;width:119px;height:0.6px;background:#e0e0e0"></div>
<div class="a" style="left:168px;top:341.5px;width:119px;height:0.6px;background:#e0e0e0"></div>
<div class="a" style="left:170.4px;top:347.6px;width:116px;height:12.4px;background:linear-gradient(90deg,#7212a8 0%,#5a10c8 10%,#1a2cf0 16%,#0a78f8 21%,#00c8f0 27%,#00e0a0 31%,#10e030 36%,#70f000 42%,#e8f000 49%,#ffc000 55%,#ff6a00 61%,#ff1000 66%,#f00000 76%,#d00000 83%,#a00000 90%,#680000 100%)"></div>
<div class="a" style="left:179px;top:344.8px;width:108px;height:1px;background:#8ac08a"></div>
<div class="a" style="left:179.1px;top:347.6px;width:0.8px;height:1.5px;background:rgba(255,255,255,0.85)"></div>
<div class="a" style="left:188.8px;top:347.6px;width:0.8px;height:1.5px;background:rgba(255,255,255,0.85)"></div>
<div class="a" style="left:198.6px;top:347.6px;width:0.8px;height:1.5px;background:rgba(255,255,255,0.85)"></div>
<div class="a" style="left:208.3px;top:347.6px;width:0.8px;height:1.5px;background:rgba(255,255,255,0.85)"></div>
<div class="a" style="left:218.1px;top:347.6px;width:0.8px;height:1.5px;background:rgba(255,255,255,0.85)"></div>
<div class="a" style="left:227.8px;top:347.6px;width:0.8px;height:1.5px;background:rgba(255,255,255,0.85)"></div>
<div class="a" style="left:237.6px;top:347.6px;width:0.8px;height:1.5px;background:rgba(255,255,255,0.85)"></div>
<div class="a" style="left:247.3px;top:347.6px;width:0.8px;height:1.5px;background:rgba(255,255,255,0.85)"></div>
<div class="a" style="left:257.1px;top:347.6px;width:0.8px;height:1.5px;background:rgba(255,255,255,0.85)"></div>
<div class="a" style="left:266.9px;top:347.6px;width:0.8px;height:1.5px;background:rgba(255,255,255,0.85)"></div>
<div class="a" style="left:276.6px;top:347.6px;width:0.8px;height:1.5px;background:rgba(255,255,255,0.85)"></div>
<div class="a" style="left:187px;top:343.6px;width:13px;height:1px;background:#7ab07a"></div>
<div class="a" style="left:248.4px;top:345.8px;width:11.6px;height:1.2px;background:#b88a5a"></div>
<div class="a" style="left:267px;top:345.8px;width:13px;height:1.2px;background:#b88a5a"></div>
<div class="a" style="left:155.8px;top:322.8px;width:9px;height:1px;background:repeating-linear-gradient(90deg,#8a8a8a 0,#8a8a8a 1px,transparent 1px,transparent 3.3px)"></div>
<div class="a" style="left:155.8px;top:336.3px;width:9px;height:1px;background:repeating-linear-gradient(90deg,#8a8a8a 0,#8a8a8a 1px,transparent 1px,transparent 3.3px)"></div>
<div class="a" style="left:155.8px;top:349.8px;width:9px;height:1px;background:repeating-linear-gradient(90deg,#8a8a8a 0,#8a8a8a 1px,transparent 1px,transparent 3.3px)"></div>
<div class="a" style="left:165px;top:355.8px;width:5px;height:1px;background:repeating-linear-gradient(90deg,#8a8a8a 0,#8a8a8a 1px,transparent 1px,transparent 3.3px)"></div>
<div class="a" style="left:291px;top:355.8px;width:1px;height:1px;background:#8a8a8a"></div>
<div class="a" style="left:304px;top:124.7px;width:270px;height:241.3px;background:#f0f0f0;border-left:1px solid #c8c8c8"></div>
<div class="a" style="left:305px;top:124.7px;width:269px;height:9.8px;background:linear-gradient(90deg,#e8e8e8 0,#e8e8e8 38.7px,#fafafa 38.7px,#fafafa 71px,#e9e9e9 71px)"></div>
<div class="t" style="left:309.2px;top:126px;color:#a6a6a6"><i>组</i><i>份</i><i>列</i><i>表</i></div>
<div class="t" style="left:352.7px;top:126px;font-weight:bold;color:#222"><i>制</i><i>样</i></div>
<div class="t" style="left:310.5px;top:144.5px;font-weight:bold;color:#222"><i>基</i><i>材</i><i>占</i><i>比</i>%</div>
<div class="t" style="left:310.5px;top:165px;font-weight:bold;color:#222"><i>计</i><i>量</i><i>组</i><i>份</i></div>
<div class="t" style="left:310.5px;top:184.8px;font-weight:bold;color:#222"><i>制</i><i>样</i><i>方</i><i>式</i></div>
<div class="t" style="left:454.7px;top:145px;font-weight:bold;color:#222"><i>计</i><i>量</i><i>方</i><i>式</i>:</div>
<div class="t" style="left:454.7px;top:165px;font-weight:bold;color:#222"><i>计</i><i>量</i><i>总</i><i>量</i></div>
<div class="t" style="left:454.7px;top:185px;color:#222"><i>余</i><i>量</i></div>
<div class="a" style="left:361px;top:139.8px;width:63px;height:16px;background:#fff;border:1px solid #b4b4b4;border-radius:2.5px"></div>
<div class="t" style="left:364.4px;top:144.3px;font-size:7.6px;color:#a0a0a0;letter-spacing:-0.4px">80<span style="margin:0 1.2px 0 1px">.</span>00</div>
<svg class="a" style="left:414.5px;top:142.3px" width="8" height="11"><path d="M0.5 4.5 L4 0.5 L7.5 4.5Z M0.5 6.5 L4 10.5 L7.5 6.5Z" fill="#777"/></svg>
<div class="a" style="left:505.3px;top:160px;width:62.7px;height:16px;background:#fff;border:1px solid #b4b4b4;border-radius:2.5px"></div>
<div class="t" style="left:508.7px;top:164.5px;font-size:7.6px;color:#a0a0a0;letter-spacing:-0.4px">100<span style="margin:0 1.2px 0 1px">.</span>0000</div>
<svg class="a" style="left:558.5px;top:162.5px" width="8" height="11"><path d="M0.5 4.5 L4 0.5 L7.5 4.5Z M0.5 6.5 L4 10.5 L7.5 6.5Z" fill="#777"/></svg>
<div class="a" style="left:505.3px;top:180px;width:62.7px;height:16px;background:#fff;border:1px solid #5ab0e0;border-radius:2.5px"></div>
<div class="t" style="left:508.7px;top:184.5px;font-size:7.6px;color:#222;letter-spacing:-0.4px">80<span style="margin:0 1.2px 0 1px">.</span>0000</div>
<svg class="a" style="left:558.5px;top:182.5px" width="8" height="11"><path d="M0.5 4.5 L4 0.5 L7.5 4.5Z M0.5 6.5 L4 10.5 L7.5 6.5Z" fill="#2a90d8"/></svg>
<div class="a" style="left:361px;top:160.3px;width:63px;height:15.2px;background:#fff;border:1px solid #b4b4b4;border-radius:2.5px"></div>
<div class="t" style="left:366px;top:164.5px;color:#888"><i>总</i><i>量</i></div>
<svg class="a" style="left:412px;top:164px" width="11" height="8"><path d="M0.5 0.5 L10.5 0.5 L5.5 7.5Z" fill="#555"/></svg>
<div class="a" style="left:361.5px;top:184.5px;width:7px;height:7px;border-radius:50%;border:1px solid #8a8a8a;background:radial-gradient(#fff,#e0e0e0)"></div>
<div class="t" style="left:373.5px;top:184.8px;font-weight:bold;color:#222"><i>新</i><i>样</i></div>
<div class="a" style="left:393.3px;top:180.9px;width:33.4px;height:15.6px;border:2px solid #c8281e"></div>
<div class="a" style="left:395.7px;top:185.0px;width:7px;height:7px;border-radius:50%;border:1px solid #8a8a8a;background:radial-gradient(#fff,#e0e0e0)"></div>
<div class="a" style="left:397.59999999999997px;top:186.9px;width:3.2px;height:3.2px;border-radius:50%;background:#2a4a70"></div>
<div class="t" style="left:406px;top:184.8px;font-weight:bold;color:#222"><i>增</i><i>量</i></div>
<div class="a" style="left:505.3px;top:145.0px;width:7px;height:7px;border-radius:50%;border:1px solid #b8b8b8;background:radial-gradient(#fff,#e0e0e0)"></div>
<div class="a" style="left:507.2px;top:146.9px;width:3.2px;height:3.2px;border-radius:50%;background:#a8a8a8"></div>
<div class="t" style="left:517px;top:145px;color:#a0a0a0"><i>重</i><i>量</i></div>
<div class="a" style="left:538.4px;top:145.0px;width:7px;height:7px;border-radius:50%;border:1px solid #b8b8b8;background:radial-gradient(#fff,#e0e0e0)"></div>
<div class="t" style="left:549.3px;top:145px;color:#a0a0a0"><i>体</i><i>积</i></div>
<div class="a" style="left:361px;top:200px;width:63px;height:16.3px;background:linear-gradient(#fdfdfd,#eef2f6);border:1px solid #7eb4d8;border-radius:2.5px"></div>
<div class="t" style="left:377px;top:204.5px;color:#3a5a80"><i>制</i><i>作</i><i>样</i><i>品</i></div>
<div class="a" style="left:505.3px;top:200.7px;width:62.2px;height:14.6px;background:linear-gradient(#3d78b0,#245a94);border:1px solid #1c4a7a;border-radius:2px"></div>
<div class="t" style="left:521px;top:204.5px;color:#e8f0f8"><i>删</i><i>除</i><i>样</i><i>品</i></div>
<div class="a" style="left:311.2px;top:220.2px;width:257px;height:121px;background:#fff;border:1px solid #a0a0a0"></div>
<div class="a" style="left:312.2px;top:221.2px;width:246px;height:11.5px;background:#f4f4f4;border-bottom:1px solid #dcdcdc"></div>
<div class="a" style="left:351.3px;top:221px;width:1px;height:119px;background:#dcdcdc"></div>
<div class="a" style="left:386.4px;top:221px;width:1px;height:119px;background:#dcdcdc"></div>
<div class="a" style="left:417px;top:221px;width:1px;height:119px;background:#dcdcdc"></div>
<div class="a" style="left:312px;top:251.5px;width:105px;height:1px;background:#dcdcdc"></div>
<div class="a" style="left:312px;top:270px;width:105px;height:1px;background:#dcdcdc"></div>
<div class="a" style="left:312px;top:289.8px;width:105px;height:1px;background:#dcdcdc"></div>
<div class="a" style="left:312px;top:308.4px;width:105px;height:1px;background:#dcdcdc"></div>
<div class="a" style="left:312px;top:327.7px;width:105px;height:1px;background:#dcdcdc"></div>
<div class="t" style="left:313.7px;top:223px;color:#333"><i>配</i><i>方</i>0</div>
<div class="t" style="left:353.9px;top:223px;color:#333"><i>样</i><i>品</i>0</div>
<div class="t" style="left:389.2px;top:223px;color:#333"><i>样</i><i>品</i>1</div>
<div class="t" style="left:313.5px;top:238.5px;font-weight:bold;color:#222"><i>制</i><i>样</i><i>方</i><i>式</i></div>
<div class="t" style="left:354px;top:238.5px;color:#333"><i>新</i><i>样</i></div>
<div class="t" style="left:389.5px;top:238.5px;color:#333"><i>增</i><i>量</i></div>
<div class="t" style="left:313.5px;top:257.5px;font-weight:bold;color:#222"><i>优</i><i>化</i><i>次</i><i>数</i></div>
<div class="t" style="left:354px;top:257.5px;color:#333">0</div>
<div class="t" style="left:389.5px;top:257.5px;color:#333">0</div>
<div class="t" style="left:313.5px;top:276.5px;font-family:'Liberation Mono',monospace;font-size:7.5px;font-weight:bold;color:#222;letter-spacing:-0.45px;-webkit-text-stroke:0.25px #222">White(U)</div>
<div class="t" style="left:352.7px;top:276.5px;font-size:7.8px;color:#444;letter-spacing:-0.2px">1<span style="margin:0 1.2px 0 1px">.</span>7382</div>
<div class="t" style="left:387.7px;top:276.5px;font-size:7.8px;color:#444;letter-spacing:-0.2px">0<span style="margin:0 1.2px 0 1px">.</span>0000</div>
<div class="t" style="left:313.5px;top:295px;font-family:'Liberation Mono',monospace;font-size:7.5px;font-weight:bold;color:#222;letter-spacing:-0.45px;-webkit-text-stroke:0.25px #222">Blue</div>
<div class="t" style="left:352.7px;top:295px;font-size:7.8px;color:#444;letter-spacing:-0.2px">7<span style="margin:0 1.2px 0 1px">.</span>9702</div>
<div class="t" style="left:387.7px;top:295px;font-size:7.8px;color:#444;letter-spacing:-0.2px">0<span style="margin:0 1.2px 0 1px">.</span>0000</div>
<div class="t" style="left:313.5px;top:314px;font-family:'Liberation Mono',monospace;font-size:7.5px;font-weight:bold;color:#222;letter-spacing:-0.45px;-webkit-text-stroke:0.25px #222">Yellow</div>
<div class="t" style="left:352.7px;top:314px;font-size:7.8px;color:#444;letter-spacing:-0.2px">0<span style="margin:0 1.2px 0 1px">.</span>1429</div>
<div class="t" style="left:387.7px;top:314px;font-size:7.8px;color:#444;letter-spacing:-0.2px">0<span style="margin:0 1.2px 0 1px">.</span>0000</div>
<div class="t" style="left:313.5px;top:333px;font-family:'Liberation Mono',monospace;font-size:7.5px;font-weight:bold;color:#222;letter-spacing:-0.45px;-webkit-text-stroke:0.25px #222">Red 122</div>
<div class="t" style="left:352.7px;top:333px;font-size:7.8px;color:#444;letter-spacing:-0.2px">10<span style="margin:0 1.2px 0 1px">.</span>1487</div>
<div class="t" style="left:387.7px;top:333px;font-size:7.8px;color:#444;letter-spacing:-0.2px">0<span style="margin:0 1.2px 0 1px">.</span>0000</div>
<div class="a" style="left:558.2px;top:221.2px;width:9.8px;height:118.8px;background:#f0f0f0;border-left:1px solid #e4e4e4"></div>
<div class="a" style="left:559.5px;top:232.6px;width:7.5px;height:58.7px;background:linear-gradient(90deg,#f4f4f4,#dcdcdc);border:1px solid #a8a8a8;border-radius:1.5px"></div>
<div class="a" style="left:561.5px;top:259.5px;width:3.5px;height:3.5px;border-top:0.6px solid #777;border-bottom:0.6px solid #777"></div>
<svg class="a" style="left:560.5px;top:224px" width="5" height="4"><path d="M0 3.5 L2.5 0.5 L5 3.5Z" fill="#333"/></svg>
<svg class="a" style="left:560.5px;top:334px" width="5" height="4"><path d="M0 0.5 L2.5 3.5 L5 0.5Z" fill="#333"/></svg>
<div class="t" style="left:310.8px;top:350.5px;color:#222"><i>样</i><i>品</i></div>
<div class="a" style="left:330px;top:346.3px;width:72.2px;height:15.6px;background:#fff;border:1px solid #6ab8e4;border-radius:2.5px"></div>
<div class="t" style="left:333.5px;top:350.5px;color:#222"><i>样</i><i>品</i>0</div>
<svg class="a" style="left:390.5px;top:351px" width="11" height="7"><path d="M0.5 0.5 L10.5 0.5 L5.5 6.5Z" fill="#2a98d8"/></svg>
<div class="a" style="left:529.7px;top:346px;width:38.3px;height:15.7px;background:linear-gradient(#fdfdfd,#eef2f6);border:1px solid #7eb4d8;border-radius:2.5px"></div>
<div class="t" style="left:537.5px;top:350px;color:#3a5a80"><i>输</i><i>出</i></div>
<svg class="a" style="left:559px;top:355px" width="6" height="4"><path d="M0.5 0.5 L5.5 0.5 L3 3.5Z" fill="#2a6ab0"/></svg>
<div class="a" style="left:9.5px;top:385px;width:38.5px;height:13.8px;background:linear-gradient(#3f7ab4,#245c98);border:1px solid #1e4e82;border-radius:2px"></div>
<div class="t" style="left:19px;top:389.3px;font-family:'Liberation Serif',serif;font-size:7.6px;font-weight:bold;color:#d4e2ee;letter-spacing:0.3px">Reset</div>
<div class="a" style="left:53px;top:385.5px;width:490px;height:13px;background:linear-gradient(#eaf8ea 0,#c0ecc0 18%,#6cd86c 26%,#18c818 34%,#10bc10 60%,#14c014 85%,#40b840 100%);border:1px solid #b8ccb8"></div>
<div class="t" style="left:291px;top:388px;font-family:'Liberation Mono',monospace;font-size:6px;color:#3a7a3a">4/4</div>
<div class="a" style="left:546.7px;top:384.3px;width:39px;height:14.7px;background:#fff;border:1px solid #8aa8c8;border-radius:2.5px"></div>
<div class="t" style="left:559.5px;top:389.3px;font-family:'Liberation Serif',serif;font-size:7.6px;font-weight:bold;color:#5a6a80;letter-spacing:0.3px">Pre</div>
<!--/MAIN-->
</body></html>
